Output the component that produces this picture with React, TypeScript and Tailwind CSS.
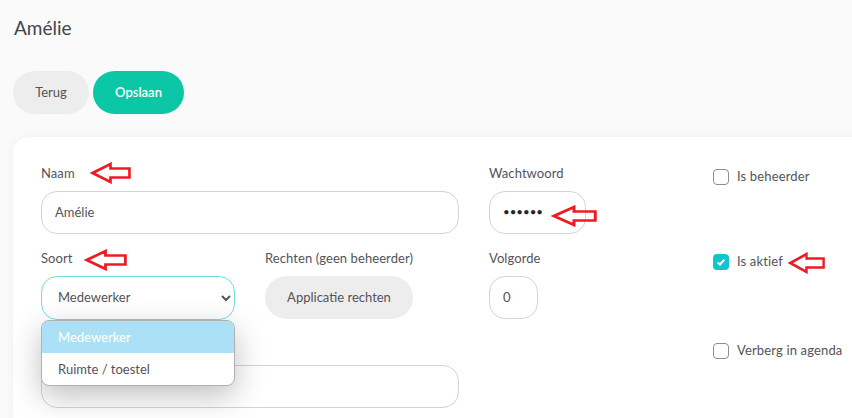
import React from 'react';

const font = "font-['Lato','Open_Sans',sans-serif]";

const Label: React.FC<{ children: React.ReactNode }> = ({ children }) => (
    <label className="block h-[18px] mb-[9px] text-[13px] leading-[18px] tracking-[0.08px] text-[#53535b]">{children}</label>
);

const Checkbox: React.FC<{ label: string; checked?: boolean }> = ({ label, checked }) => (
    <div className="flex items-center h-4 mt-[5px] whitespace-nowrap">
        {checked ? (
            <span className="flex items-center justify-center w-4 h-4 rounded-[4px] bg-[#10c5cb]">
                <svg viewBox="0 0 12 12" className="w-[10px] h-[10px]" fill="none" stroke="#fff" strokeWidth="2.4">
                    <path d="M2 6.5 L4.8 9 L10 3.2" />
                </svg>
            </span>
        ) : (
            <span className="block w-4 h-4 rounded-[4px] border border-[#8e8e8e] bg-white" />
        )}
        <span className="ml-2 text-[13px] tracking-[0.15px] text-[#53535b]">{label}</span>
    </div>
);

// red annotation arrows that were drawn on top of the screenshot
const Arrow: React.FC<{ className: string }> = ({ className }) => (
    <svg viewBox="0 0 40 22" preserveAspectRatio="none" className={`absolute h-[22px] ${className}`} fill="none" stroke="#ed1c24" strokeWidth="2.6">
        <path d="M2.5 11 L20 2 L20 6.5 L38.5 6.5 L38.5 15.5 L20 15.5 L20 20 Z" />
    </svg>
);

export default function App() {
    return (
        <div className={`relative w-[852px] h-[418px] overflow-hidden bg-[#fafafa] ${font}`}>
            <div className="pl-[13px]">
                <h1 className="pt-4 pl-px h-[71px] text-[19px] leading-[24px] text-[#45454c]">Amélie</h1>
                <div className="flex gap-1">
                    <button className="w-[76px] h-[43px] rounded-[22px] bg-[#ededed] text-[13px] text-[#53535b]">Terug</button>
                    <button className="w-[91px] h-[43px] rounded-[22px] bg-[#0bc7a6] text-[13px] font-semibold text-white">Opslaan</button>
                </div>

                <div className="mt-[23px] w-[900px] h-[320px] rounded-2xl bg-white shadow-[0_0_10px_rgba(0,0,0,0.05)] pt-[27px] pl-[28px]">
                    <div className="grid grid-cols-[194px_194px_194px_194px] gap-x-[30px]">
                        <div className="col-span-2 h-[85px]">
                            <Label>Naam</Label>
                            <input
                                readOnly
                                defaultValue="Amélie"
                                className="w-full h-[43px] px-[13px] pb-[2px] rounded-[16px] border border-[#d4d4d4] bg-white text-[13px] text-[#53535b]"
                            />
                        </div>
                        <div>
                            <Label>Wachtwoord</Label>
                            <input
                                readOnly
                                type="password"
                                defaultValue="amelie"
                                className="w-[97px] h-[43px] px-[13px] pb-[2px] rounded-[16px] border border-[#d4d4d4] bg-white text-[11.5px] text-[#27272a]"
                            />
                        </div>
                        <Checkbox label="Is beheerder" />

                        <div className="relative h-[89px]">
                            <Label>Soort</Label>
                            <select className="w-full h-11 pl-[12px] pr-[8px] pb-[2px] rounded-[16px] border border-[#6fdedc] bg-white text-[13px] text-[#53535b]">
                                <option>Medewerker</option>
                                <option>Ruimte / toestel</option>
                            </select>
                            <div className="absolute z-10 top-[71px] left-0 w-full rounded-lg border border-[#b0b0b0] bg-white overflow-hidden text-[13px] shadow-[0_10px_30px_rgba(0,0,0,0.25)]">
                                <div className="h-[32px] pl-4 leading-[32px] bg-[#abe0f6] text-white font-medium">Medewerker</div>
                                <div className="h-[32px] pl-4 leading-[32px] text-[#53535b]">Ruimte / toestel</div>
                            </div>
                        </div>
                        <div>
                            <Label>Rechten (geen beheerder)</Label>
                            <button className="w-[148px] h-[43px] rounded-[22px] bg-[#ededed] text-[13px] text-[#53535b]">Applicatie rechten</button>
                        </div>
                        <div>
                            <Label>Volgorde</Label>
                            <input
                                readOnly
                                defaultValue="0"
                                className="w-[49px] h-[43px] px-[13px] pb-[2px] rounded-[16px] border border-[#d4d4d4] bg-white text-[13px] text-[#53535b]"
                            />
                        </div>
                        <Checkbox label="Is aktief" checked />

                        <div className="col-span-2">
                            <div className="h-[27px]" />
                            <div className="w-full h-[43px] rounded-[16px] border border-[#d4d4d4] bg-white" />
                        </div>
                        <div />
                        <Checkbox label="Verberg in agenda" />
                    </div>
                </div>
            </div>

            <Arrow className="left-[90px] top-[162px] w-[41px]" />
            <Arrow className="left-[84px] top-[249px] w-[43px]" />
            <Arrow className="left-[551px] top-[205px] w-[46px]" />
            <Arrow className="left-[788px] top-[252px] w-[37px]" />
        </div>
    );
}
